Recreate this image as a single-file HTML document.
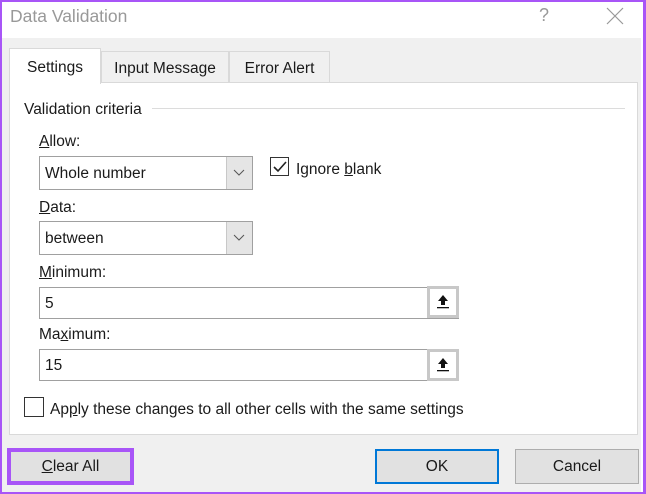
<!DOCTYPE html>
<html><head><meta charset="utf-8"><style>
*{box-sizing:border-box;margin:0;padding:0}
body{width:646px;height:494px;overflow:hidden;background:#fff;font-family:"Liberation Sans",sans-serif;font-size:15.5px;color:#1a1a1a;position:relative}
.a{position:absolute}
.frame{left:0;top:0;width:646px;height:494px;border:2px solid #a855f7;border-right-width:3px}
.u{text-decoration:underline}
.box{background:#fff;border:1px solid #a0a0a0}
.btn{background:#e1e1e1;border:1px solid #adadad;text-align:center;line-height:33px}
</style></head><body>
<div class="a" style="left:2px;top:38px;width:639px;height:454px;background:#f0f0f0"></div>
<div class="a" style="left:10px;top:6px;font-size:17.5px;color:#999">Data Validation</div>
<div class="a" style="left:539px;top:5px;font-size:18px;color:#999">?</div>
<svg class="a" style="left:606px;top:7px" width="18" height="18"><path d="M1 1L17 17M17 1L1 17" stroke="#999" stroke-width="1.2"/></svg>
<div class="a" style="left:9px;top:82px;width:629px;height:353px;background:#fff;border:1px solid #d9d9d9"></div>
<div class="a" style="left:101px;top:51px;width:128px;height:32px;background:#f0f0f0;border:1px solid #d9d9d9;text-align:center;line-height:33px">Input Message</div>
<div class="a" style="left:229px;top:51px;width:101px;height:32px;background:#f0f0f0;border:1px solid #d9d9d9;text-align:center;line-height:33px">Error Alert</div>
<div class="a" style="left:9px;top:48px;width:92px;height:36px;background:#fff;border:1px solid #d9d9d9;border-bottom:none;text-align:center;line-height:38px">Settings</div>
<div class="a" style="left:24px;top:101px">Validation criteria</div>
<div class="a" style="left:152px;top:108px;width:473px;height:1px;background:#dcdcdc"></div>
<div class="a" style="left:39px;top:133px"><span class="u">A</span>llow:</div>
<div class="a box" style="left:39px;top:156px;width:214px;height:34px;padding:8px 0 0 5px">Whole number</div>
<div class="a" style="left:226px;top:157px;width:26px;height:32px;background:#e5e5e5;border-left:1px solid #c8c8c8"></div>
<svg class="a" style="left:233px;top:169px" width="12" height="8"><path d="M1 1L6 6L11 1" stroke="#555" fill="none"/></svg>
<div class="a" style="left:270px;top:157px;width:19px;height:19px;border:1px solid #333;background:#fff"></div>
<svg class="a" style="left:272px;top:159px" width="16" height="16"><path d="M2 8L6 12L14 3" stroke="#222" stroke-width="1.6" fill="none"/></svg>
<div class="a" style="left:296px;top:161px">Ignore <span class="u">b</span>lank</div>
<div class="a" style="left:39px;top:199px"><span class="u">D</span>ata:</div>
<div class="a box" style="left:39px;top:221px;width:214px;height:34px;padding:8px 0 0 5px">between</div>
<div class="a" style="left:226px;top:222px;width:26px;height:32px;background:#e5e5e5;border-left:1px solid #c8c8c8"></div>
<svg class="a" style="left:233px;top:234px" width="12" height="8"><path d="M1 1L6 6L11 1" stroke="#555" fill="none"/></svg>
<div class="a" style="left:39px;top:264px"><span class="u">M</span>inimum:</div>
<div class="a box" style="left:39px;top:287px;width:420px;height:32px;padding:7px 0 0 5px">5</div>
<div class="a" style="left:427px;top:286px;width:32px;height:32px;background:#fff;border:3px solid #c8c8c8"></div>
<svg class="a" style="left:435px;top:293px" width="16" height="16"><path d="M8 2L3 8H6V12H10V8H13Z" fill="#111"/><rect x="2" y="14" width="12" height="1.3" fill="#111"/></svg>
<div class="a" style="left:39px;top:326px">Ma<span class="u">x</span>imum:</div>
<div class="a box" style="left:39px;top:349px;width:420px;height:32px;padding:7px 0 0 5px">15</div>
<div class="a" style="left:427px;top:349px;width:32px;height:32px;background:#fff;border:3px solid #c8c8c8"></div>
<svg class="a" style="left:435px;top:356px" width="16" height="16"><path d="M8 2L3 8H6V12H10V8H13Z" fill="#111"/><rect x="2" y="14" width="12" height="1.3" fill="#111"/></svg>
<div class="a" style="left:24px;top:397px;width:20px;height:20px;border:1px solid #333;background:#fff"></div>
<div class="a" style="left:50px;top:401px">Ap<span class="u">p</span>ly these changes to all other cells with the same settings</div>
<div class="a btn" style="left:7px;top:448px;width:127px;height:37px;border:4px solid #a855f7;line-height:29px"><span class="u">C</span>lear All</div>
<div class="a btn" style="left:375px;top:449px;width:124px;height:35px;border:2px solid #0078d7;line-height:31px">OK</div>
<div class="a btn" style="left:515px;top:449px;width:124px;height:35px">Cancel</div>
<div class="a frame"></div>
</body></html>
